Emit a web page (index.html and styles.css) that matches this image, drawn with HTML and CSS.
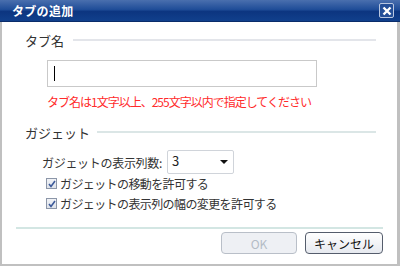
FILE: index.html
```html
<!DOCTYPE html>
<html lang="ja">
<head>
    <meta charset="UTF-8">
    <title>タブの追加</title>
    <link rel="stylesheet" href="styles.css">
</head>
<body>
    <div class="dialog">
        <div class="titlebar">
            <span class="title">タブの追加</span>
            <span class="close">
                <svg width="10" height="10" viewBox="0 0 10 10"><path d="M1.5 1.5 L8.5 8.5 M8.5 1.5 L1.5 8.5" stroke="#fff" stroke-width="2.4"/></svg>
            </span>
        </div>

        <div class="content">
            <div class="section-head">
                <span>タブ名</span>
                <span class="rule"></span>
            </div>
            <div class="field">
                <div class="text-input"><span class="caret"></span></div>
                <div class="error">タブ名は1文字以上、255文字以内で指定してください</div>
            </div>

            <div class="section-head gadget-head">
                <span>ガジェット</span>
                <span class="rule"></span>
            </div>
            <div class="row">
                <span class="label">ガジェットの表示列数:</span>
                <div class="select">
                    <span>3</span>
                    <span class="arrow"></span>
                </div>
            </div>
            <div class="checks">
                <label class="check"><span class="box">
                    <svg width="8" height="8" viewBox="0 0 8 8"><path d="M1 4 L3 6.5 L7 1" fill="none" stroke="#3c5a9a" stroke-width="1.6"/></svg>
                </span>ガジェットの移動を許可する</label>
                <label class="check"><span class="box">
                    <svg width="8" height="8" viewBox="0 0 8 8"><path d="M1 4 L3 6.5 L7 1" fill="none" stroke="#3c5a9a" stroke-width="1.6"/></svg>
                </span>ガジェットの表示列の幅の変更を許可する</label>
            </div>
        </div>

        <div class="footer">
            <button class="button" disabled>OK</button>
            <button class="button">キャンセル</button>
        </div>
    </div>
</body>
</html>
```

FILE: styles.css
```css
* {
    margin: 0;
    padding: 0;
    box-sizing: border-box;
}

body {
    font-family: "Noto Sans CJK JP", "Noto Sans", sans-serif;
    font-size: 12px;
    color: #333;
    background: #fff;
}

.dialog {
    width: 400px;
    height: 266px;
    border: 2px solid #c0c0c0;
    border-top: none;
    border-right-width: 3px;
    display: flex;
    flex-direction: column;
}

.titlebar {
    height: 22px;
    margin: 0 -3px 0 -2px;
    padding: 0 6px 0 12px;
    display: flex;
    align-items: center;
    justify-content: space-between;
    background: linear-gradient(#4a6fae 0%, #1f4d98 45%, #0c3580 55%, #11408c 100%);
    border-bottom: 1px solid #0a2c6a;
}

.title {
    color: #fff;
    font-weight: bold;
    font-size: 12px;
    letter-spacing: 0.3px;
}

.close {
    width: 15px;
    height: 15px;
    border: 1px solid #b8c6e0;
    border-radius: 2px;
    background: #244f98;
    display: flex;
    align-items: center;
    justify-content: center;
}

.content {
    flex: 1;
    padding: 8px 21px 0 23px;
}

.section-head {
    display: flex;
    align-items: center;
    font-size: 13px;
    color: #333;
    height: 20px;
}

.section-head .rule {
    flex: 1;
    height: 2px;
    background: #e3e5ea;
    margin-left: 9px;
}

.gadget-head .rule {
    background: #dbe6e6;
    margin-left: 7px;
}

.field {
    padding: 10px 0 0 22px;
}

.text-input {
    width: 270px;
    height: 27px;
    border: 1px solid #c9c9c9;
    display: flex;
    align-items: center;
    padding-left: 6px;
}

.caret {
    width: 1px;
    height: 15px;
    background: #000;
}

.error {
    color: #ff2b2b;
    font-size: 12px;
    letter-spacing: -1px;
    margin-top: 7px;
    height: 16px;
    line-height: 16px;
}

.gadget-head {
    margin-top: 12px;
}

.row {
    display: flex;
    align-items: center;
    margin: 8px 0 0 17px;
    height: 24px;
}

.label {
    font-size: 12px;
    letter-spacing: -0.3px;
    margin-right: 5px;
}

.select {
    width: 67px;
    height: 24px;
    border: 1px solid #d0d4da;
    border-radius: 2px;
    display: flex;
    align-items: center;
    justify-content: space-between;
    padding: 0 5px 0 4px;
    font-size: 13px;
    color: #222;
}

.select span:first-child {
    margin-top: -4px;
}

.arrow {
    width: 0;
    height: 0;
    border-left: 4px solid transparent;
    border-right: 4px solid transparent;
    border-top: 4px solid #111;
}

.checks {
    margin: 0 0 0 21px;
}

.check {
    display: flex;
    align-items: center;
    height: 19px;
    margin-bottom: 1px;
    font-size: 12px;
    letter-spacing: -0.6px;
}

.box {
    width: 11px;
    height: 11px;
    border: 1px solid #8c96a8;
    background: linear-gradient(#f0f2f6, #dfe3ea);
    display: flex;
    align-items: center;
    justify-content: center;
    margin-right: 3px;
}

.footer {
    margin: 0 14px 0 14px;
    border-top: 2px solid #d3e6e3;
    padding: 3px 0 0 0;
    height: 37px;
    display: flex;
    justify-content: flex-end;
    gap: 8px;
}

.button {
    height: 22px;
    font-family: inherit;
    font-size: 12px;
    border: 1px solid #555d6c;
    border-radius: 4px;
    background: linear-gradient(#ffffff, #e6e9ef);
    color: #111;
    width: 78px;
}

.button:disabled {
    width: 76px;
    border-color: #b9bfc8;
    background: #eef0f4;
    color: #b4bcc6;
}
```
